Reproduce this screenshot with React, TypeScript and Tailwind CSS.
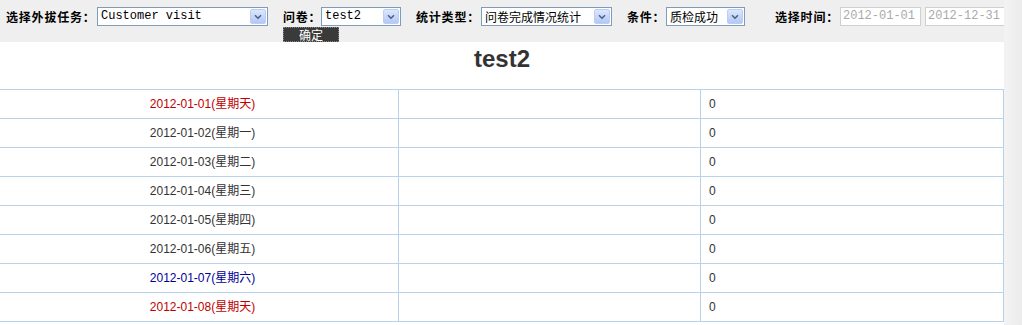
import React from 'react'

const rows = [
  { date: '2012-01-01', day: '星期天', tone: 'red' },
  { date: '2012-01-02', day: '星期一', tone: 'normal' },
  { date: '2012-01-03', day: '星期二', tone: 'normal' },
  { date: '2012-01-04', day: '星期三', tone: 'normal' },
  { date: '2012-01-05', day: '星期四', tone: 'normal' },
  { date: '2012-01-06', day: '星期五', tone: 'normal' },
  { date: '2012-01-07', day: '星期六', tone: 'blue' },
  { date: '2012-01-08', day: '星期天', tone: 'red' },
]

const toneClass: Record<string, string> = {
  red: 'text-[#c00000]',
  blue: 'text-[#000099]',
  normal: 'text-[#333333]',
}

function FakeSelect({ value, width, mono }: { value: string; width: string; mono?: boolean }) {
  return (
    <div
      className={`${width} h-[19px] flex items-center bg-white border border-[#7f9db9] pl-[3px] pr-[1px] text-[12px] text-black`}
    >
      <span
        className={`flex-1 overflow-hidden whitespace-nowrap leading-[17px] ${
          mono ? "font-['Liberation_Mono',monospace]" : "font-['Noto_Sans_CJK_SC',sans-serif]"
        }`}
      >
        {value}
      </span>
      <span className="w-[16px] h-[15px] shrink-0 flex items-center justify-center rounded-[2px] border border-[#b9cdf6] bg-gradient-to-b from-[#dce7fd] to-[#b4c8f5]">
        <svg width="8" height="6" viewBox="0 0 8 6">
          <path d="M1 1.2 L4 4.2 L7 1.2" fill="none" stroke="#4d6185" strokeWidth="1.6" />
        </svg>
      </span>
    </div>
  )
}

function Label({ text, width }: { text: string; width: string }) {
  return (
    <span
      className={`${width} shrink-0 text-[12px] font-bold text-black tracking-[0.8px] font-['Noto_Sans_CJK_SC',sans-serif] leading-[19px] whitespace-nowrap`}
    >
      {text}
    </span>
  )
}

function DateBox({ value }: { value: string }) {
  return (
    <div className="w-[81px] h-[19px] shrink-0 border border-[#d0d0d0] bg-white pl-[2px] text-[12px] leading-[17px] text-[#aaaaaa] font-['Liberation_Mono',monospace] whitespace-nowrap">
      {value}
    </div>
  )
}

export default function App() {
  return (
    <div className="w-[1022px] h-[325px] overflow-hidden flex bg-[#efefef] font-['Liberation_Sans','Noto_Sans_CJK_SC',sans-serif]">
      <div className="w-[1004px] shrink-0 flex flex-col">
        {/* filter bar */}
        <div className="h-[42px] flex items-start pt-[7px] pl-[6px]">
          <div className="flex items-center">
            <Label text="选择外拔任务：" width="w-[91px]" />
            <FakeSelect value="Customer visit" width="w-[171px]" mono />
          </div>
          <div className="ml-[15px] flex flex-col">
            <div className="flex items-center">
              <Label text="问卷：" width="w-[38px]" />
              <FakeSelect value="test2" width="w-[80px]" mono />
            </div>
            <button className="mt-[1px] w-[56px] h-[15px] bg-[#3a3a3a] border border-dotted border-[#888] text-white text-[12px] leading-[13px] font-['Noto_Sans_CJK_SC',sans-serif]">
              确定
            </button>
          </div>
          <div className="ml-[15px] flex items-center">
            <Label text="统计类型：" width="w-[65px]" />
            <FakeSelect value="问卷完成情况统计" width="w-[131px]" />
          </div>
          <div className="ml-[15px] flex items-center">
            <Label text="条件：" width="w-[39px]" />
            <FakeSelect value="质检成功" width="w-[79px]" />
          </div>
          <div className="ml-[30px] flex items-center">
            <Label text="选择时间：" width="w-[65px]" />
            <div className="flex gap-[4px]">
              <DateBox value="2012-01-01" />
              <DateBox value="2012-12-31" />
            </div>
          </div>
        </div>

        {/* report */}
        <div className="flex-1 bg-white">
          <div className="h-[47px] flex items-center justify-center pb-[14px]">
            <h1 className="text-[24px] font-bold text-[#333333] font-['Liberation_Sans',sans-serif]">test2</h1>
          </div>
          <div className="border-t border-[#b8d2ea]">
            {rows.map((r) => (
              <div key={r.date} className="h-[29px] flex border-b border-r border-[#b8d2ea] text-[12px]">
                <div className={`w-[399px] border-r border-[#b8d2ea] flex items-center justify-center pl-[7px] ${toneClass[r.tone]}`}>
                  {r.date}({r.day})
                </div>
                <div className="w-[302px] border-r border-[#b8d2ea]" />
                <div className="flex-1 flex items-center pl-[8px] text-[#333333]">0</div>
              </div>
            ))}
          </div>
        </div>
      </div>
      <div className="flex-1 bg-gradient-to-r from-[#f3f3f3] to-[#ececec]" />
    </div>
  )
}
